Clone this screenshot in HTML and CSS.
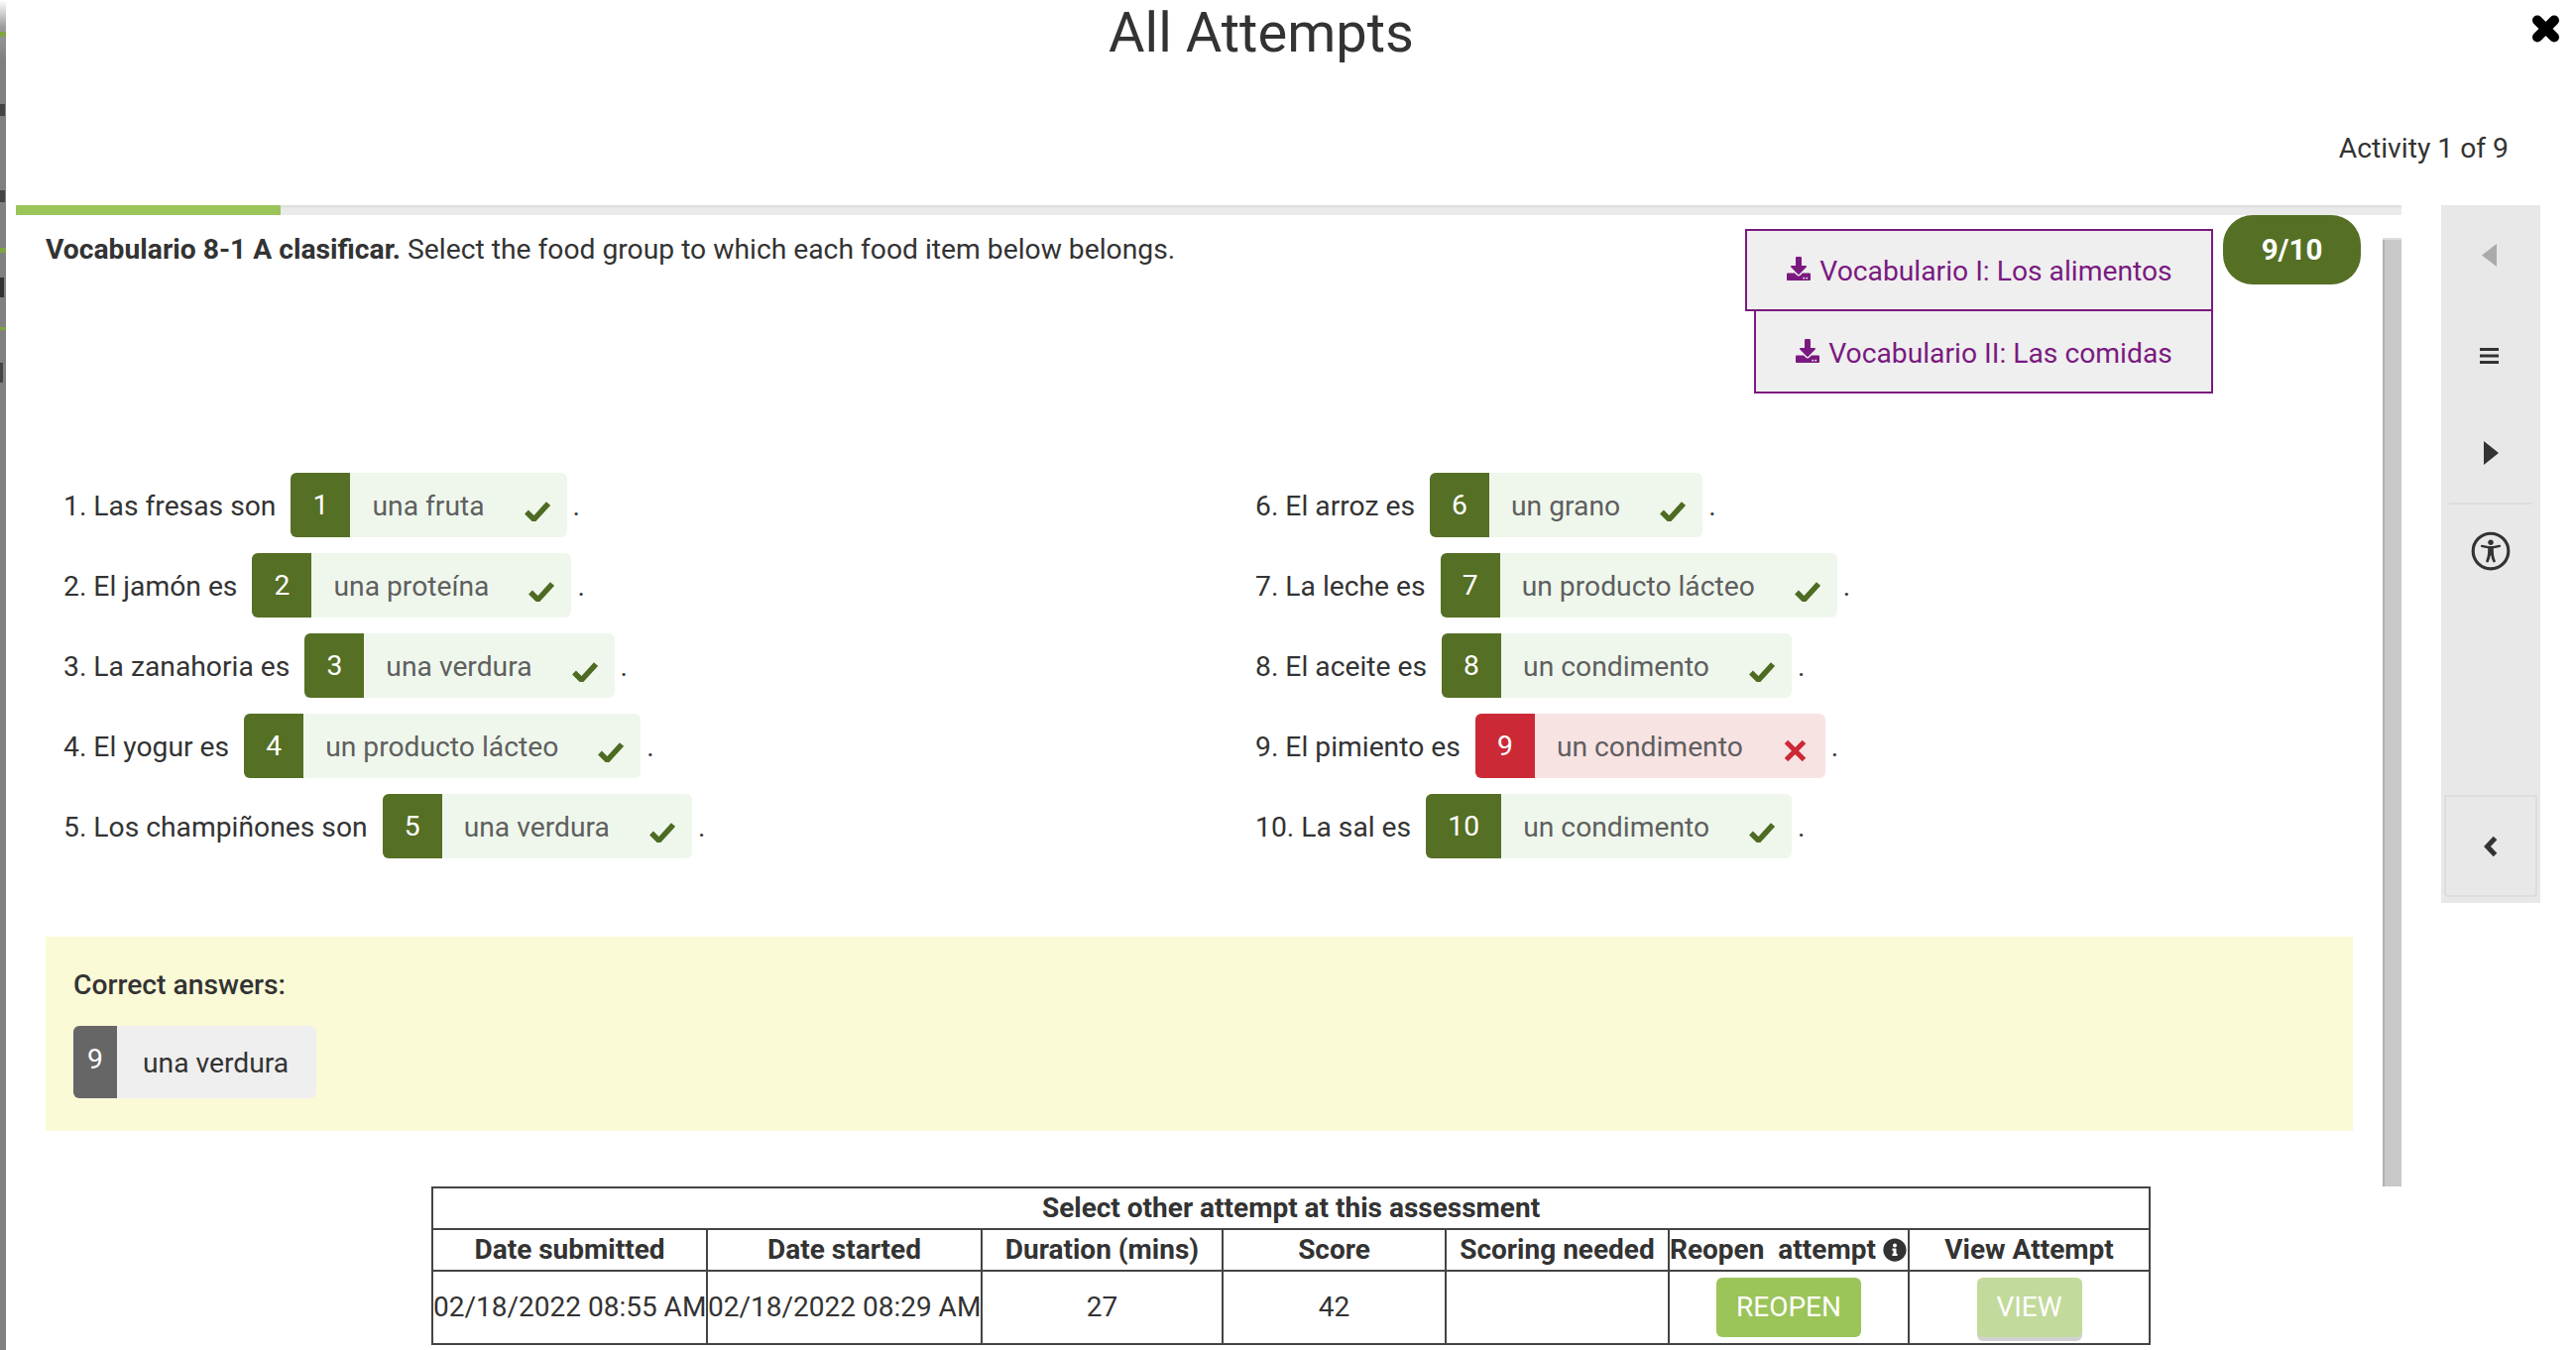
FILE: index.html
```html
<!DOCTYPE html>
<html lang="en">
<head>
<meta charset="utf-8">
<title>All Attempts</title>
<link rel="stylesheet" href="styles.css">
</head>
<body>
<svg class="defs" aria-hidden="true">
  <symbol id="i-check" viewBox="0 0 26 21"><path d="M2 11.5 9.5 19 24 3" fill="none" stroke="currentColor" stroke-width="5.5"/></symbol>
  <symbol id="i-down" viewBox="0 0 512 512"><path d="M216 0h80c13.3 0 24 10.7 24 24v168h87.7c17.8 0 26.7 21.5 14.1 34.1L269.7 378.3c-7.5 7.5-19.8 7.5-27.3 0L90.1 226.1c-12.6-12.6-3.7-34.1 14.1-34.1H192V24c0-13.3 10.7-24 24-24zm296 376v112c0 13.3-10.7 24-24 24H24c-13.3 0-24-10.7-24-24V376c0-13.3 10.7-24 24-24h146.7l49 49c20.1 20.1 52.5 20.1 72.6 0l49-49H488c13.3 0 24 10.7 24 24zm-124 88c0-11-9-20-20-20s-20 9-20 20 9 20 20 20 20-9 20-20zm64 0c0-11-9-20-20-20s-20 9-20 20 9 20 20 20 20-9 20-20z" fill="currentColor"/></symbol>
</svg>

<div class="backdrop" aria-hidden="true">
  <span class="bd-green bd-g1"></span><span class="bd-green bd-g2"></span><span class="bd-green bd-g3"></span>
  <span class="bd-mark bd-m1"></span><span class="bd-mark bd-m2"></span><span class="bd-mark bd-m3"></span><span class="bd-mark bd-m4"></span>
</div>

<div class="modal">
  <header class="modal-head">
    <h1 class="title">All Attempts</h1>
    <button class="close" aria-label="Close">
      <svg viewBox="0 0 29 28" width="29" height="28"><path d="M6 5.5 23 22.5M23 5.5 6 22.5" fill="none" stroke="#000" stroke-width="10" stroke-linecap="round"/></svg>
    </button>
    <div class="counter">Activity 1 of 9</div>
  </header>

  <div class="workspace">
    <main class="player">
      <div class="progress"><div class="progress-fill"></div></div>
      <div class="viewport">
        <div class="activity">
          <div class="head">
            <p class="instr"><strong>Vocabulario 8-1 A clasificar.</strong> Select the food group to which each food item below belongs.</p>
            <div class="downloads">
              <a class="dl"><svg class="dl-icon"><use href="#i-down"/></svg>Vocabulario I: Los alimentos</a>
              <a class="dl dl-second"><svg class="dl-icon"><use href="#i-down"/></svg>Vocabulario II: Las comidas</a>
            </div>
            <div class="score">9/10</div>
          </div>

          <div class="columns">
            <div class="col">
              <div class="row"><span class="label">1. Las fresas son</span><span class="chip"><span class="num">1</span><span class="ans">una fruta</span><svg class="mark"><use href="#i-check"/></svg></span><span class="dot">.</span></div>
              <div class="row"><span class="label">2. El jamón es</span><span class="chip"><span class="num">2</span><span class="ans">una proteína</span><svg class="mark"><use href="#i-check"/></svg></span><span class="dot">.</span></div>
              <div class="row"><span class="label">3. La zanahoria es</span><span class="chip"><span class="num">3</span><span class="ans">una verdura</span><svg class="mark"><use href="#i-check"/></svg></span><span class="dot">.</span></div>
              <div class="row"><span class="label">4. El yogur es</span><span class="chip"><span class="num">4</span><span class="ans">un producto lácteo</span><svg class="mark"><use href="#i-check"/></svg></span><span class="dot">.</span></div>
              <div class="row"><span class="label">5. Los champiñones son</span><span class="chip"><span class="num">5</span><span class="ans">una verdura</span><svg class="mark"><use href="#i-check"/></svg></span><span class="dot">.</span></div>
            </div>
            <div class="col">
              <div class="row"><span class="label">6. El arroz es</span><span class="chip"><span class="num">6</span><span class="ans">un grano</span><svg class="mark"><use href="#i-check"/></svg></span><span class="dot">.</span></div>
              <div class="row"><span class="label">7. La leche es</span><span class="chip"><span class="num">7</span><span class="ans">un producto lácteo</span><svg class="mark"><use href="#i-check"/></svg></span><span class="dot">.</span></div>
              <div class="row"><span class="label">8. El aceite es</span><span class="chip"><span class="num">8</span><span class="ans">un condimento</span><svg class="mark"><use href="#i-check"/></svg></span><span class="dot">.</span></div>
              <div class="row"><span class="label">9. El pimiento es</span><span class="chip chip-wrong"><span class="num">9</span><span class="ans">un condimento</span><svg class="mark-x" viewBox="0 0 23 23"><path d="M2.5 2.5 20.5 20.5M20.5 2.5 2.5 20.5" fill="none" stroke="currentColor" stroke-width="5"/></svg></span><span class="dot">.</span></div>
              <div class="row"><span class="label">10. La sal es</span><span class="chip"><span class="num num-wide">10</span><span class="ans">un condimento</span><svg class="mark"><use href="#i-check"/></svg></span><span class="dot">.</span></div>
            </div>
          </div>

          <section class="correct">
            <div class="correct-title">Correct answers:</div>
            <div class="key"><span class="key-num">9</span><span class="key-text">una verdura</span></div>
          </section>
        </div>
        <div class="scrollbar"><div class="thumb"></div></div>
      </div>
    </main>

    <aside class="rail">
      <div class="rail-nav">
        <button class="rail-btn rail-prev" aria-label="Previous"><svg width="15" height="23" viewBox="0 0 15 23"><path d="M15 0V23L0 11.5Z" fill="#aaa"/></svg></button>
        <button class="rail-btn rail-menu" aria-label="Menu"><svg width="19" height="16" viewBox="0 0 19 16"><path d="M0 1.5H19M0 8H19M0 14.5H19" stroke="#333" stroke-width="3"/></svg></button>
        <button class="rail-btn" aria-label="Next"><svg width="15" height="24" viewBox="0 0 15 24"><path d="M0 0V24L15 12Z" fill="#333"/></svg></button>
        <div class="rail-sep"></div>
        <button class="rail-btn rail-a11y" aria-label="Accessibility">
          <svg width="40" height="40" viewBox="0 0 512 512"><circle cx="256" cy="256" r="228" fill="none" stroke="#333" stroke-width="40"/><path fill="#333" d="M256 108c19.882 0 36 16.118 36 36s-16.118 36-36 36-36-16.118-36-36 16.118-36 36-36zm117.741 98.023c-28.712 6.779-55.511 12.748-82.14 15.807.851 101.023 12.306 123.052 25.037 155.621 3.617 9.26-.957 19.698-10.217 23.315-9.261 3.617-19.699-.957-23.316-10.217-8.705-22.308-17.086-40.636-22.261-78.549h-9.686c-5.167 37.851-13.534 56.208-22.262 78.549-3.615 9.255-14.05 13.836-23.315 10.217-9.26-3.617-13.834-14.056-10.217-23.315 12.713-32.541 24.185-54.541 25.037-155.621-26.629-3.058-53.428-9.027-82.141-15.807-8.6-2.031-13.926-10.648-11.895-19.249s10.647-13.926 19.249-11.895c96.686 22.829 124.283 22.783 220.775 0 8.599-2.03 17.218 3.294 19.249 11.895 2.029 8.601-3.297 17.219-11.897 19.249z"/></svg>
        </button>
      </div>
      <button class="rail-collapse" aria-label="Collapse"><svg width="14" height="22" viewBox="0 0 14 22"><path d="M11.5 2.5 3.5 11l8 8.5" fill="none" stroke="#333" stroke-width="5"/></svg></button>
    </aside>
  </div>

  <table class="attempts">
    <colgroup><col class="c1"><col class="c2"><col class="c3"><col class="c4"><col class="c5"><col class="c6"><col class="c7"></colgroup>
    <tr class="tr-title"><th colspan="7">Select other attempt at this assessment</th></tr>
    <tr class="tr-head">
      <th>Date submitted</th><th>Date started</th><th>Duration (mins)</th><th>Score</th><th>Scoring needed</th>
      <th class="reopen-head">Reopen&nbsp; attempt <svg class="info" viewBox="0 0 512 512"><path fill="#333" d="M256 8C119.043 8 8 119.083 8 256c0 136.997 111.043 248 248 248s248-111.003 248-248C504 119.083 392.957 8 256 8zm0 110c23.196 0 42 18.804 42 42s-18.804 42-42 42-42-18.804-42-42 18.804-42 42-42zm56 254c0 6.627-5.373 12-12 12h-88c-6.627 0-12-5.373-12-12v-24c0-6.627 5.373-12 12-12h12v-64h-12c-6.627 0-12-5.373-12-12v-24c0-6.627 5.373-12 12-12h64c6.627 0 12 5.373 12 12v100h12c6.627 0 12 5.373 12 12v24z"/></svg></th>
      <th>View Attempt</th>
    </tr>
    <tr class="tr-body">
      <td class="cell-text">02/18/2022 08:55 AM</td><td class="cell-text">02/18/2022 08:29 AM</td><td class="cell-text">27</td><td class="cell-text">42</td><td></td>
      <td><button class="btn btn-reopen">REOPEN</button></td>
      <td><button class="btn btn-view">VIEW</button></td>
    </tr>
  </table>
</div>
</body>
</html>
```

FILE: styles.css
```css
* { box-sizing: border-box; }
html, body { margin: 0; padding: 0; }
body {
  width: 2598px;
  height: 1362px;
  overflow: hidden;
  display: flex;
  background: #fff;
  color: #333;
  font-family: Roboto, "Liberation Sans", sans-serif;
  font-size: 28.25px;
}
button { font-family: inherit; border: 0; padding: 0; background: none; }
.defs { position: absolute; width: 0; height: 0; }

/* page behind the modal */
.backdrop {
  position: relative;
  flex: 0 0 6px;
  height: 100%;
  overflow: hidden;
  background: linear-gradient(#fff 0, #9a9a9a 28px, #808080 60px, #808080 100%);
}
.bd-green { position: absolute; left: 0; width: 6px; height: 5px; background: #7ea63e; }
.bd-g1 { top: 32px; }
.bd-g2 { top: 250px; }
.bd-g3 { top: 330px; height: 3px; }
.bd-mark { position: absolute; left: 0; background: #333; }
.bd-m1 { top: 105px; width: 5px; height: 12px; background: #444; }
.bd-m2 { top: 192px; width: 5px; height: 12px; background: #444; }
.bd-m3 { top: 280px; width: 4px; height: 20px; }
.bd-m4 { top: 366px; width: 3px; height: 20px; background: #444; }

.modal { position: relative; flex: 1; min-width: 0; display: flex; flex-direction: column; }

.modal-head { position: relative; height: 207px; padding: 0 68px 0 0; }
.title {
  margin: 0 -68px 0 0;
  padding-right: 60px;
  text-align: center;
  font-size: 56px;
  font-weight: 400;
  line-height: 66px;
}
.close { position: absolute; top: 15px; right: 16px; display: block; line-height: 0; }
.counter { margin-top: 67px; text-align: right; line-height: 33px; }

.workspace { display: flex; align-items: flex-start; padding-left: 10px; }
.player { flex: 0 0 2406px; }
.progress { height: 10px; background: linear-gradient(#dcdcdc, #eaeaea 40%); }
.progress-fill { width: 267px; height: 100%; background: #9bc459; }

.viewport { display: flex; height: 980px; }
.activity { flex: 1; min-width: 0; padding: 0 30px 0 30px; }
.scrollbar { flex: 0 0 19px; background: #c8c8c8; border-left: 2px solid #b0b0b0; }
.thumb { height: 25px; background: #fff; margin-left: -2px; border-bottom: 2px solid #ddd; }

.head { display: flex; align-items: flex-start; height: 260px; margin-right: -8px; }
.instr { flex: 1; margin: 18px 0 0; line-height: 33px; }
.instr strong { font-weight: 700; }
.downloads { display: flex; flex-direction: column; align-items: flex-end; margin-top: 14px; }
.dl {
  display: flex;
  align-items: center;
  justify-content: center;
  height: 83px;
  width: 472px;
  padding-top: 2px;
  background: #efefef;
  border: 2px solid #7a1a80;
  color: #7a1a80;
}
.dl-second { width: 463px; border-top-width: 0; padding-top: 4px; }
.dl-icon { width: 26px; height: 24px; margin-right: 8px; margin-top: -6px; }
.score {
  flex: 0 0 139px;
  height: 70px;
  margin-left: 10px;
  border-radius: 30px;
  background: #556f24;
  color: #fff;
  font-size: 29.5px;
  font-weight: 700;
  text-align: center;
  line-height: 71px;
}

.columns { display: grid; grid-template-columns: 1202px 1fr; padding-left: 18px; }
.col { display: flex; flex-direction: column; gap: 16px; }
.row { display: flex; align-items: center; height: 65px; }
.label { margin: 2px 15px 0 0; white-space: nowrap; }
.chip {
  display: flex;
  align-items: center;
  height: 65px;
  background: #eff7ec;
  border-radius: 6px;
  overflow: hidden;
  padding-right: 17px;
}
.num {
  flex: 0 0 60px;
  align-self: stretch;
  background: #556f24;
  color: #fff;
  text-align: center;
  line-height: 65px;
}
.num-wide { flex-basis: 76px; }
.ans { margin: 2px 40px 0 22px; color: #5f5f5f; white-space: nowrap; }
.mark { width: 26px; height: 21px; color: #4d6b22; margin-top: 12px; }
.dot { margin: 2px 0 0 6px; }
.chip-wrong { background: #f8e3e3; padding-right: 19px; }
.chip-wrong .num { background: #cc2936; }
.chip-wrong .ans { margin-right: 41px; }
.mark-x { width: 23px; height: 23px; color: #cc2936; margin-top: 10px; }

.correct {
  margin-top: 79px;
  height: 196px;
  padding: 29px 28px 0;
  background: #fafad7;
}
.correct-title { font-weight: 500; line-height: 40px; }
.key {
  display: inline-flex;
  align-items: center;
  height: 73px;
  margin-top: 21px;
  background: #efefef;
  border-radius: 6px;
  overflow: hidden;
  padding-right: 28px;
}
.key-num { flex: 0 0 44px; align-self: stretch; background: #666; color: #fff; text-align: center; line-height: 68px; }
.key-text { margin: 2px 0 0 26px; }

.rail { flex: 0 0 100px; margin-left: 40px; height: 704px; background: #e8e8e8; padding: 0 3px 6px; display: flex; flex-direction: column; }
.rail-nav { flex: 0 0 597px; border-bottom: 2px solid #ddd; padding: 0 2px; display: flex; flex-direction: column; align-items: stretch; }
.rail-btn { display: flex; align-items: center; justify-content: center; height: 100px; }
.rail-prev { padding-right: 3px; }
.rail-menu { padding: 4px 3px 0 0; }
.rail-sep { height: 2px; background: #ddd; margin: 0 3px; }
.rail-a11y { height: 94px; }
.rail-collapse { flex: 1; border: 2px solid #ddd; border-top: 0; border-radius: 0 0 4px 4px; display: flex; align-items: center; justify-content: center; }

.attempts {
  margin: 0 0 0 429px;
  width: 1732px;
  table-layout: fixed;
  border-collapse: collapse;
  border: 2px solid #444;
  color: #333;
  font-size: 28px;
}
.attempts th, .attempts td { border: 2px solid #444; padding: 0; text-align: center; white-space: nowrap; overflow: hidden; }
.attempts th { font-weight: 700; padding-bottom: 2px; }
.attempts td.cell-text { padding-bottom: 2px; }
.c1 { width: 277px; } .c2 { width: 277px; } .c3 { width: 243px; } .c4 { width: 225px; } .c5 { width: 225px; } .c6 { width: 242px; } .c7 { width: 243px; }
.tr-title { height: 42px; }
.tr-head { height: 42px; }
.tr-body { height: 74px; }
.reopen-head { text-align: left !important; }
.info { width: 24px; height: 24px; vertical-align: -3px; }
.btn { display: block; margin: 0 auto; height: 60px; padding-bottom: 2px; border-radius: 6px; color: #fff; font-size: 28px; }
.btn-reopen { width: 146px; background: #9bc459; }
.btn-view { width: 106px; background: #c2da9b; box-shadow: 0 4px 0 #d2d2d2; }
```
